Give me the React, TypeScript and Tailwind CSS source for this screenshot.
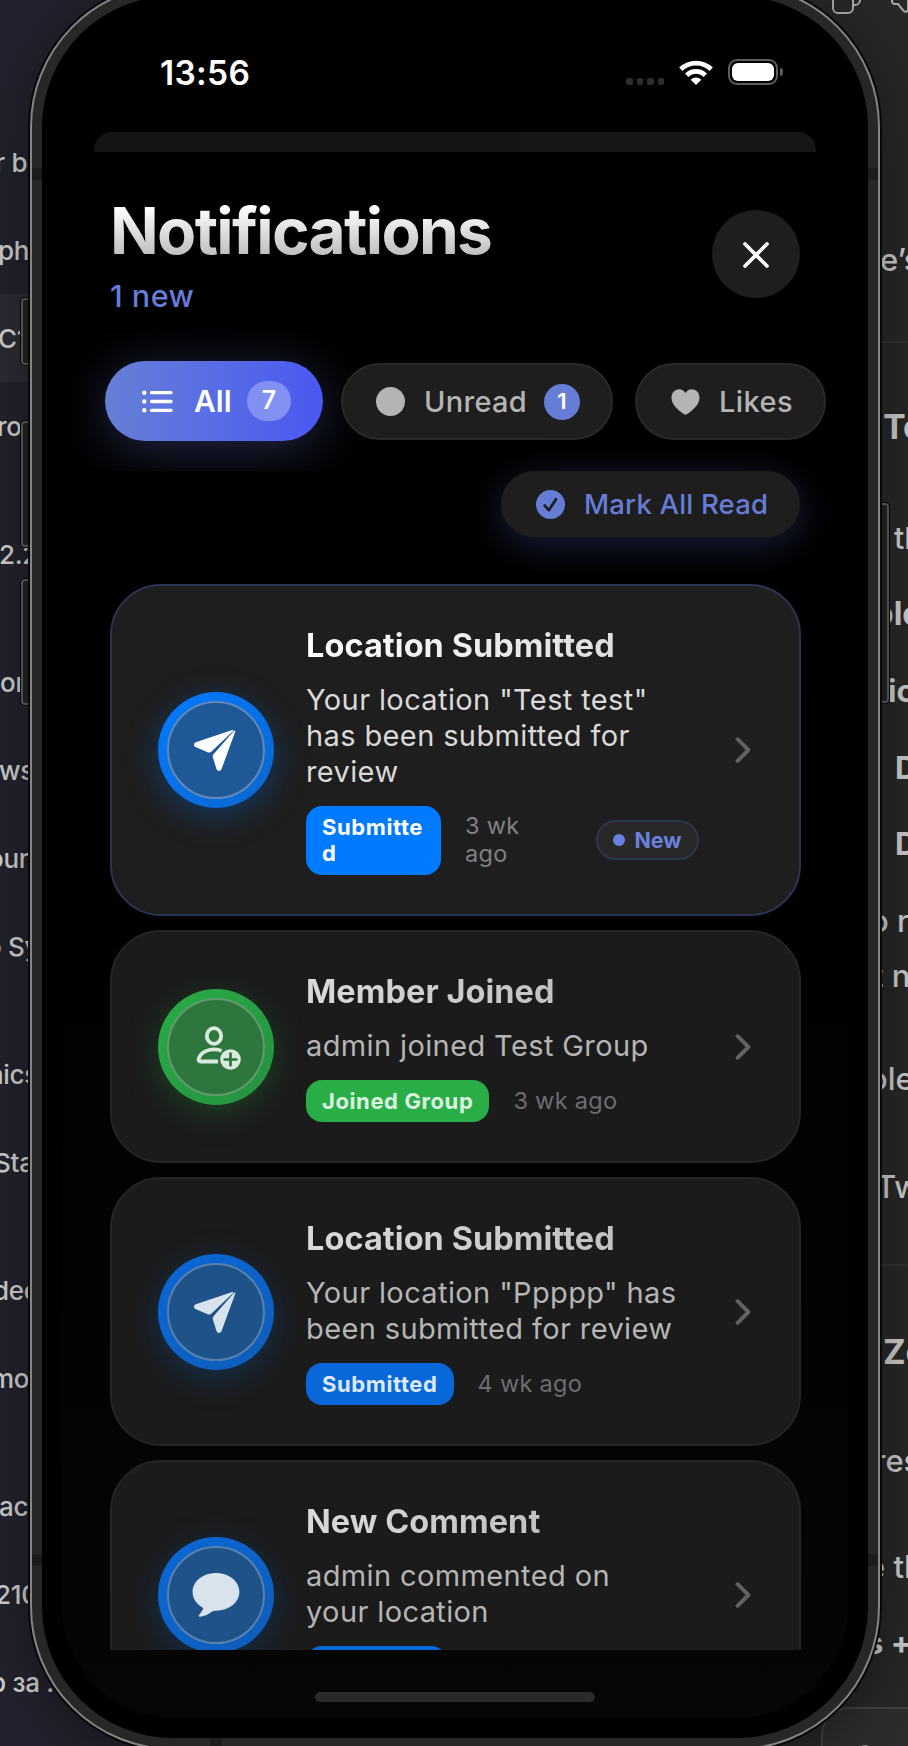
import type { ReactNode } from "react";

const sidebarRows = [
  { text: "r b", offset: "-ml-[5px]", gap: "" },
  { text: "ph", offset: "-ml-[2px]", gap: "" },
  { text: "C1", offset: "-ml-[2px]", gap: "", selected: true },
  { text: "ro", offset: "-ml-[3px]", gap: "" },
  { text: "2.2", offset: "-ml-[1px]", gap: "mt-[40px]" },
  { text: "or", offset: "ml-0", gap: "mt-[40px]" },
  { text: "ws", offset: "-ml-[1px]", gap: "" },
  { text: "oun", offset: "-ml-[12px]", gap: "" },
  { text: "o Sy", offset: "-ml-[14px]", gap: "" },
  { text: "nics", offset: "-ml-[12px]", gap: "mt-[40px]" },
  { text: "Sta", offset: "-ml-[6px]", gap: "" },
  { text: "dec", offset: "-ml-[7px]", gap: "mt-10" },
  { text: "mo", offset: "-ml-[9px]", gap: "" },
  { text: "ac", offset: "-ml-[1px]", gap: "mt-10" },
  { text: "210", offset: "-ml-[5px]", gap: "" },
  { text: "p за .", offset: "-ml-[10px]", gap: "" },
];

const articleRows = [
  { text: "e’s", cls: "mt-[240px] -ml-[4px] text-[31px]" },
  { text: "To", cls: "mt-[127px] -ml-[1px] text-[34px] font-bold" },
  { text: "th", cls: "mt-[71px] ml-[10px] text-[30px]" },
  { text: "ole", cls: "mt-[36px] -ml-[10px] text-[32px] font-bold" },
  { text: "ic", cls: "mt-[37px] ml-[4px] text-[31px] font-bold" },
  { text: "D", cls: "mt-[37px] ml-[11px] text-[31px] font-bold" },
  { text: "D", cls: "mt-[36px] ml-[11px] text-[31px] font-bold" },
  { text: "o r", cls: "mt-[37px] -ml-[14px] text-[31px]" },
  { text: "t n", cls: "mt-[15px] -ml-[11px] text-[31px]" },
  { text: "ole", cls: "mt-[63px] -ml-[15px] text-[31px]" },
  { text: "Tw", cls: "mt-[68px] -ml-[8px] text-[31px]" },
  { text: "Zo", cls: "mt-[125px] -ml-[1px] text-[34px] font-bold" },
  { text: "res", cls: "mt-[69px] -ml-[10px] text-[31px]" },
  { text: "e th", cls: "mt-[66px] -ml-[17px] text-[31px]" },
  { text: "s +", cls: "mt-[36px] -ml-[18px] text-[31px] font-bold" },
];

function PlaneIcon() {
  return (
    <svg viewBox="0 0 44 44" className="mr-[2px] size-[44px]" fill="currentColor">
      <path d="M39.2 1.9 2.8 14.3C.6 15.1.4 18 2.5 19L14.6 24.2a3.5 3.5 0 0 0 3.9-.6L39.9 3.2c.6-.6.1-1.5-.7-1.3Z" />
      <path d="M42.4 3.3c.2-.8-.8-1.2-1.3-.6L20.7 26a3.5 3.5 0 0 0-.8 3.5L23.500 41c.8 2.400 4 2.500 5 .2Z" />
    </svg>
  );
}

function MemberIcon() {
  return (
    <svg viewBox="0 0 46 46" className="mt-[2px] ml-[6px] size-[46px]" fill="none" stroke="currentColor" strokeWidth="3.800">
      <ellipse cx="18" cy="11" rx="7.200" ry="7.800" />
      <path d="M22 36.500H5c-2 0-2.900-1.300-2.200-3.100C4.800 28 10.600 24.300 18 24.300c3 0 5.500.6 7.600 1.600" />
      <circle cx="34.500" cy="34.500" r="10.300" fill="currentColor" stroke="none" />
      <path d="M34.500 28.700v11.600M28.700 34.500h11.600" stroke="#2d763e" strokeWidth="2.700" strokeLinecap="round" />
    </svg>
  );
}

function BubbleIcon() {
  return (
    <svg viewBox="0 0 48 46" className="h-[46px] w-[48px]" fill="currentColor">
      <path d="M24 1C11 1 .6 9.300.6 20c0 6.400 3.800 12 9.800 15.500.8.500.9 1.200.4 2.100-.9 1.700-2.200 3.600-3.600 5.200-.9 1.100-.3 2 .9 1.900 4.500-.3 8.800-2.700 12.200-5.200.9-.6 1.700-.8 2.800-.8h1C37.200 38.500 47.400 30.300 47.400 20 47.400 9.300 37 1 24 1Z" />
    </svg>
  );
}

function Chevron() {
  return (
    <svg viewBox="0 0 16 26" className="h-[26px] w-[16px]" fill="none" stroke="#626262" strokeWidth="3.900" strokeLinecap="round" strokeLinejoin="round">
      <path d="M2.600 2.200 13.400 13 2.600 23.800" />
    </svg>
  );
}

const tones = {
  unread: {
    ring: "bg-linear-to-br from-[#007aff] to-[#0b66cf] shadow-[0_8px_34px_rgba(0,122,255,0.3)]",
    disc: "bg-[#1f5896] border-[#6388b4]",
    icon: "text-white",
    badge: "bg-[#007aff] text-white",
  },
  green: {
    ring: "bg-linear-to-br from-[#28ac46] to-[#25913e] shadow-[0_8px_34px_rgba(40,173,70,0.25)]",
    disc: "bg-[#2d763e] border-[#629a6e]",
    icon: "text-[#dbe9de]",
    badge: "bg-[#28ad47] text-[#dcf4e1]",
  },
  blue: {
    ring: "bg-linear-to-br from-[#0968d8] to-[#0f5cb8] shadow-[0_8px_34px_rgba(0,110,230,0.25)]",
    disc: "bg-[#1e5289] border-[#5a81ab]",
    icon: "text-[#d9e3ee]",
    badge: "bg-[#0968d9] text-[#dbe9fa]",
  },
};

type CardProps = {
  title: string;
  lines: string[];
  badge: string[];
  time: string[];
  tone: keyof typeof tones;
  icon: ReactNode;
  height: string;
  isNew?: boolean;
};

function NotificationCard({ title, lines, badge, time, tone, icon, height, isNew }: CardProps) {
  const t = tones[tone];
  return (
    <article
      className={`flex shrink-0 items-center rounded-[51px] border-2 pl-[46px] pr-[48px] ${height} ${
        isNew ? "border-[#2c3454] bg-[#1e1e1e]" : "border-[#252525] bg-[#1b1b1b]"
      }`}
    >
      <div className={`flex size-[116px] shrink-0 items-center justify-center rounded-full ${t.ring}`}>
        <div className={`flex size-[98px] items-center justify-center rounded-full border-2 ${t.disc} ${t.icon}`}>{icon}</div>
      </div>
      <div className="ml-[32px] flex w-[393px] flex-col items-start">
        <h2
          className={`h-[42px] bg-linear-to-r bg-clip-text text-[32.500px] leading-[42px] font-bold tracking-[0.05px] whitespace-nowrap text-transparent ${
            isNew ? "from-white to-[#dedede]" : "from-[#dadada] to-[#c2c2c2]"
          }`}
        >
          {title}
        </h2>
        <p className={`mt-[15px] text-[29px] leading-[36px] tracking-[0.38px] ${isNew ? "text-[#d9d9d9]" : "text-[#b5b5b5]"}`}>
          {lines.map((l) => (
            <span key={l} className="block whitespace-nowrap">
              {l}
            </span>
          ))}
        </p>
        <div className="mt-[15.500px] flex w-full items-center">
          <div className={`rounded-[16px] px-[16px] py-[8px] text-[22px] leading-[26.500px] font-bold tracking-[0.6px] ${isNew ? "w-[135px]" : ""} ${t.badge}`}>
            {badge.map((l) => (
              <span key={l} className="block whitespace-nowrap">
                {l}
              </span>
            ))}
          </div>
          <div className={`ml-[24px] text-[23.500px] leading-[28.500px] tracking-[0.3px] ${isNew ? "text-[#808084]" : "text-[#6e6e72]"}`}>
            {time.map((l) => (
              <span key={l} className="block whitespace-nowrap">
                {l}
              </span>
            ))}
          </div>
          {isNew && (
            <div className="ml-auto flex h-[40px] w-[103px] items-center justify-center gap-[9px] rounded-full border-2 border-[#2e3550] bg-[#282828] text-[21.500px] font-bold text-[#6a80dc]">
              <span className="size-[12px] rounded-full bg-[#6a80dc]" />
              New
            </div>
          )}
        </div>
      </div>
      <div className="ml-auto">
        <Chevron />
      </div>
    </article>
  );
}

function StatusBar() {
  return (
    <div className="flex h-[116px] shrink-0 items-start justify-between pt-[37px] pr-[65px] pl-[98px]">
      <span className="text-[33.500px] leading-[40px] font-semibold tracking-[0.3px] text-white">13:56</span>
      <div className="flex h-[40px] items-center">
        <div className="mt-[17px] flex gap-[4px]">
          <i className="size-[6.500px] rounded-[2px] bg-[#2e2e2e]" />
          <i className="size-[6.500px] rounded-[2px] bg-[#2e2e2e]" />
          <i className="size-[6.500px] rounded-[2px] bg-[#2e2e2e]" />
          <i className="size-[6.500px] rounded-[2px] bg-[#2e2e2e]" />
        </div>
        <svg viewBox="0 0 34 25" className="mb-[2px] ml-[15px] h-[25px] w-[34px]" fill="none" stroke="#fff" strokeWidth="4.700">
          <path d="M1.800 9.200a21.800 21.800 0 0 1 30.400 0" />
          <path d="M7.700 15.200a13.400 13.400 0 0 1 18.600 0" />
          <path d="M17 25l-5.300-5.300a7.700 7.700 0 0 1 10.600 0Z" fill="#fff" stroke="none" />
        </svg>
        <div className="mb-[2px] ml-[15px] h-[26px] w-[50px] rounded-[9px] border-2 border-[#5c5c5c] p-[2px]">
          <div className="size-full rounded-[6px] bg-white" />
        </div>
        <div className="mb-[2px] ml-[2px] h-[8px] w-[3px] rounded-r-full bg-[#5c5c5c]" />
      </div>
    </div>
  );
}

function Tabs() {
  return (
    <nav className="mt-[16px] flex h-[141px] shrink-0 overflow-hidden pt-[31px] pl-[43px]">
      <div className="flex h-[80px] w-[218px] shrink-0 items-center rounded-full bg-linear-to-r from-[#677fd7] to-[#4b57f1] pl-[37px] text-white shadow-[0_8px_54px_rgba(110,130,225,0.32)]">
        <svg viewBox="0 0 31 23" className="h-[23px] w-[31px]" fill="none" stroke="currentColor" strokeWidth="3.300" strokeLinecap="round">
          <path d="M9.500 2.700h19.500M9.500 11.500h19.500M9.500 20.300h19.500" />
          <path d="M2.300 2.700h.01M2.300 11.500h.01M2.300 20.300h.01" strokeWidth="4.400" />
        </svg>
        <span className="ml-[21px] text-[30px] font-semibold">All</span>
        <span className="ml-auto mr-[32px] flex h-[40px] w-[44px] items-center justify-center rounded-full bg-[#8290f1] text-[25px] font-semibold">7</span>
      </div>
      <div className="mt-[2px] ml-[18px] flex h-[77px] w-[272px] shrink-0 items-center rounded-full border-2 border-[#292929] bg-[#1e1e1e] pl-[33px] text-[#b4b4b4]">
        <span className="size-[29px] rounded-full bg-[#b4b4b4]" />
        <span className="ml-[19px] text-[29px] font-medium tracking-[0.3px]">Unread</span>
        <span className="ml-auto mr-[31px] flex size-[36px] items-center justify-center rounded-full bg-[#667dd8] text-[22px] font-semibold text-white">1</span>
      </div>
      <div className="mt-[2px] ml-[22px] flex h-[77px] w-[191px] shrink-0 items-center rounded-full border-2 border-[#292929] bg-[#1e1e1e] pl-[34px] text-[#b4b4b4]">
        <svg viewBox="0 0 28 26" className="h-[26px] w-[29px]" fill="currentColor">
          <path d="M14 25.600c.5 0 1-.3 1.600-.7C23 20.200 28 14.800 28 8.700 28 3.700 24.600.2 20.200.2c-2.700 0-4.900 1.500-6.200 3.800C12.700 1.700 10.500.2 7.800.2 3.400.2 0 3.700 0 8.700c0 6.100 5 11.500 12.400 16.200.6.400 1.100.7 1.600.7Z" />
        </svg>
        <span className="ml-[19px] text-[29px] font-medium tracking-[0.4px]">Likes</span>
      </div>
    </nav>
  );
}

function Phone() {
  return (
    <div className="absolute top-[-16px] left-[30px] h-[1766px] w-[850px]">
      <div className="absolute top-[314px] -left-[9px] h-[67px] w-[12px] rounded-l-[4px] border-2 border-[#5e5e5e] bg-[#232323] shadow-[0_0_0_1px_#050505]" />
      <div className="absolute top-[437px] -left-[9px] h-[126px] w-[12px] rounded-l-[4px] border-2 border-[#5e5e5e] bg-[#232323] shadow-[0_0_0_1px_#050505]" />
      <div className="absolute top-[595px] -left-[9px] h-[126px] w-[12px] rounded-l-[4px] border-2 border-[#5e5e5e] bg-[#232323] shadow-[0_0_0_1px_#050505]" />
      <div className="absolute top-[519px] -right-[9px] h-[200px] w-[12px] rounded-r-[4px] border-2 border-[#5e5e5e] bg-[#232323] shadow-[0_0_0_1px_#050505]" />
      <div className="relative size-full rounded-[143px] border-2 border-[#858585] bg-[#272727] p-[10px] shadow-[0_0_0_2px_#080808,0_10px_50px_rgba(0,0,0,0.4)]">
        <div className="absolute top-[182px] left-0 h-[12px] w-full bg-[#1c1c1c]" />
        <div className="absolute top-[1568px] left-0 h-[12px] w-full bg-[#1c1c1c]" />
        <div className="absolute bottom-0 left-[178px] h-[12px] w-[12px] bg-[#1c1c1c]" />
        <div className="relative size-full rounded-[131px] bg-black p-[20px]">
          <div className="flex h-full flex-col overflow-hidden rounded-[112px] bg-linear-to-b from-black via-[#010101] to-[#060606]">
            <StatusBar />
            <div className="mx-[32px] h-[20px] shrink-0 rounded-t-[18px] bg-linear-to-r from-[#141414] from-58% to-[#151618] to-60%" />
            <header className="flex h-[162px] shrink-0 items-center justify-between px-[48px] pt-[40px]">
              <div>
                <h1 className="h-[76px] bg-linear-to-b from-white from-20% to-[#b8b8b8] to-90% bg-clip-text text-[64px] leading-[78px] font-bold tracking-[-1.7px] text-transparent">
                  Notifications
                </h1>
                <p className="mt-[10px] text-[30.500px] leading-[36px] font-medium tracking-[0.5px] text-[#667dd8]">1 new</p>
              </div>
              <button className="mt-[2px] flex size-[88px] items-center justify-center rounded-full bg-[#1e1e1e]">
                <svg viewBox="0 0 28 28" className="mt-[1px] size-[28px]" stroke="#fff" strokeWidth="3.700" strokeLinecap="round">
                  <path d="M3 3l22 22M25 3 3 25" />
                </svg>
              </button>
            </header>
            <Tabs />
            <button className="mr-[48px] flex h-[66px] w-[299px] shrink-0 items-center self-end rounded-full bg-[#1e1e1e] pl-[35px] text-[27.500px] font-medium tracking-[0.2px] whitespace-nowrap text-[#667dd8] shadow-[0_8px_38px_rgba(102,126,234,0.25)]">
              <svg viewBox="0 0 29 29" className="size-[29px] shrink-0">
                <circle cx="14.500" cy="14.500" r="14.500" fill="#667dd8" />
                <path d="M8.800 15.600l4 4.600 7.200-11" fill="none" stroke="#1e1e1e" strokeWidth="2.800" strokeLinecap="round" strokeLinejoin="round" />
              </svg>
              <span className="mt-px ml-[19px]">Mark All Read</span>
            </button>
            <main className="mt-[47px] flex h-[1066px] shrink-0 flex-col gap-[14px] overflow-hidden pr-[47px] pl-[48px]">
              <NotificationCard
                title="Location Submitted"
                lines={['Your location "Test test"', "has been submitted for", "review"]}
                badge={["Submitte", "d"]}
                time={["3 wk", "ago"]}
                tone="unread"
                icon={<PlaneIcon />}
                height="h-[332px]"
                isNew
              />
              <NotificationCard
                title="Member Joined"
                lines={["admin joined Test Group"]}
                badge={["Joined Group"]}
                time={["3 wk ago"]}
                tone="green"
                icon={<MemberIcon />}
                height="h-[233px]"
              />
              <NotificationCard
                title="Location Submitted"
                lines={['Your location "Ppppp" has', "been submitted for review"]}
                badge={["Submitted"]}
                time={["4 wk ago"]}
                tone="blue"
                icon={<PlaneIcon />}
                height="h-[269px]"
              />
              <NotificationCard
                title="New Comment"
                lines={["admin commented on", "your location"]}
                badge={["Comment"]}
                time={["4 wk ago"]}
                tone="blue"
                icon={<BubbleIcon />}
                height="h-[269px]"
              />
            </main>
            <div className="mt-[42px] h-[10px] w-[280px] shrink-0 self-center rounded-full bg-[#2a2a2a]" />
          </div>
        </div>
      </div>
    </div>
  );
}

export default function App() {
  return (
    <div className="relative h-[1746px] w-[908px] overflow-hidden bg-[#1c1c1c] font-['Inter','Liberation_Sans',sans-serif]">
      <div className="flex h-full">
        <aside className="w-[210px] overflow-hidden bg-[#22222e] pt-[118px] text-[26px] font-medium tracking-[-0.3px] text-[#cdcdcb]">
          {sidebarRows.map((r) => (
            <div key={r.text} className={`flex h-[88px] items-center whitespace-nowrap ${r.gap} ${r.selected ? "bg-[#2b2b33]" : ""}`}>
              <span className={r.offset}>{r.text}</span>
            </div>
          ))}
        </aside>
        <section className="flex flex-1 justify-end bg-[#272727]">
          <div className="relative h-full w-[87px]">
            <svg viewBox="0 0 78 16" className="absolute top-0 left-[10px] h-[16px] w-[78px]" fill="none" stroke="#a8a8a8" strokeWidth="2">
              <path d="M2 -8V8a5 5 0 0 0 5 5h10a5 5 0 0 0 5-5V-8M22 5h2a5 5 0 0 0 5-5v-4" />
              <path d="M61 -6V1a3 3 0 0 0 3 3h3l5 6c2 3 5 2 5-1V-4" />
            </svg>
            <div className="absolute top-[341px] right-0 h-[2px] w-[28px] bg-[#313131]" />
            <div className="absolute top-[1264px] right-0 h-[2px] w-[28px] bg-[#313131]" />
            <div className="absolute top-[1707px] left-0 h-[80px] w-[140px] rounded-[28px] border-2 border-[#414141] bg-[#2c2c2c] pt-[36px] pl-[34px]">
              <div className="size-[16px] rounded-full bg-[#8b8b8b]" />
            </div>
            <div className="ml-[63px] flex flex-col font-medium text-[#c8c8c8]">
              {articleRows.map((r, i) => (
                <span key={i} className={`h-[40px] leading-[40px] whitespace-nowrap ${r.cls}`}>
                  {r.text}
                </span>
              ))}
            </div>
          </div>
        </section>
      </div>
      <Phone />
    </div>
  );
}
